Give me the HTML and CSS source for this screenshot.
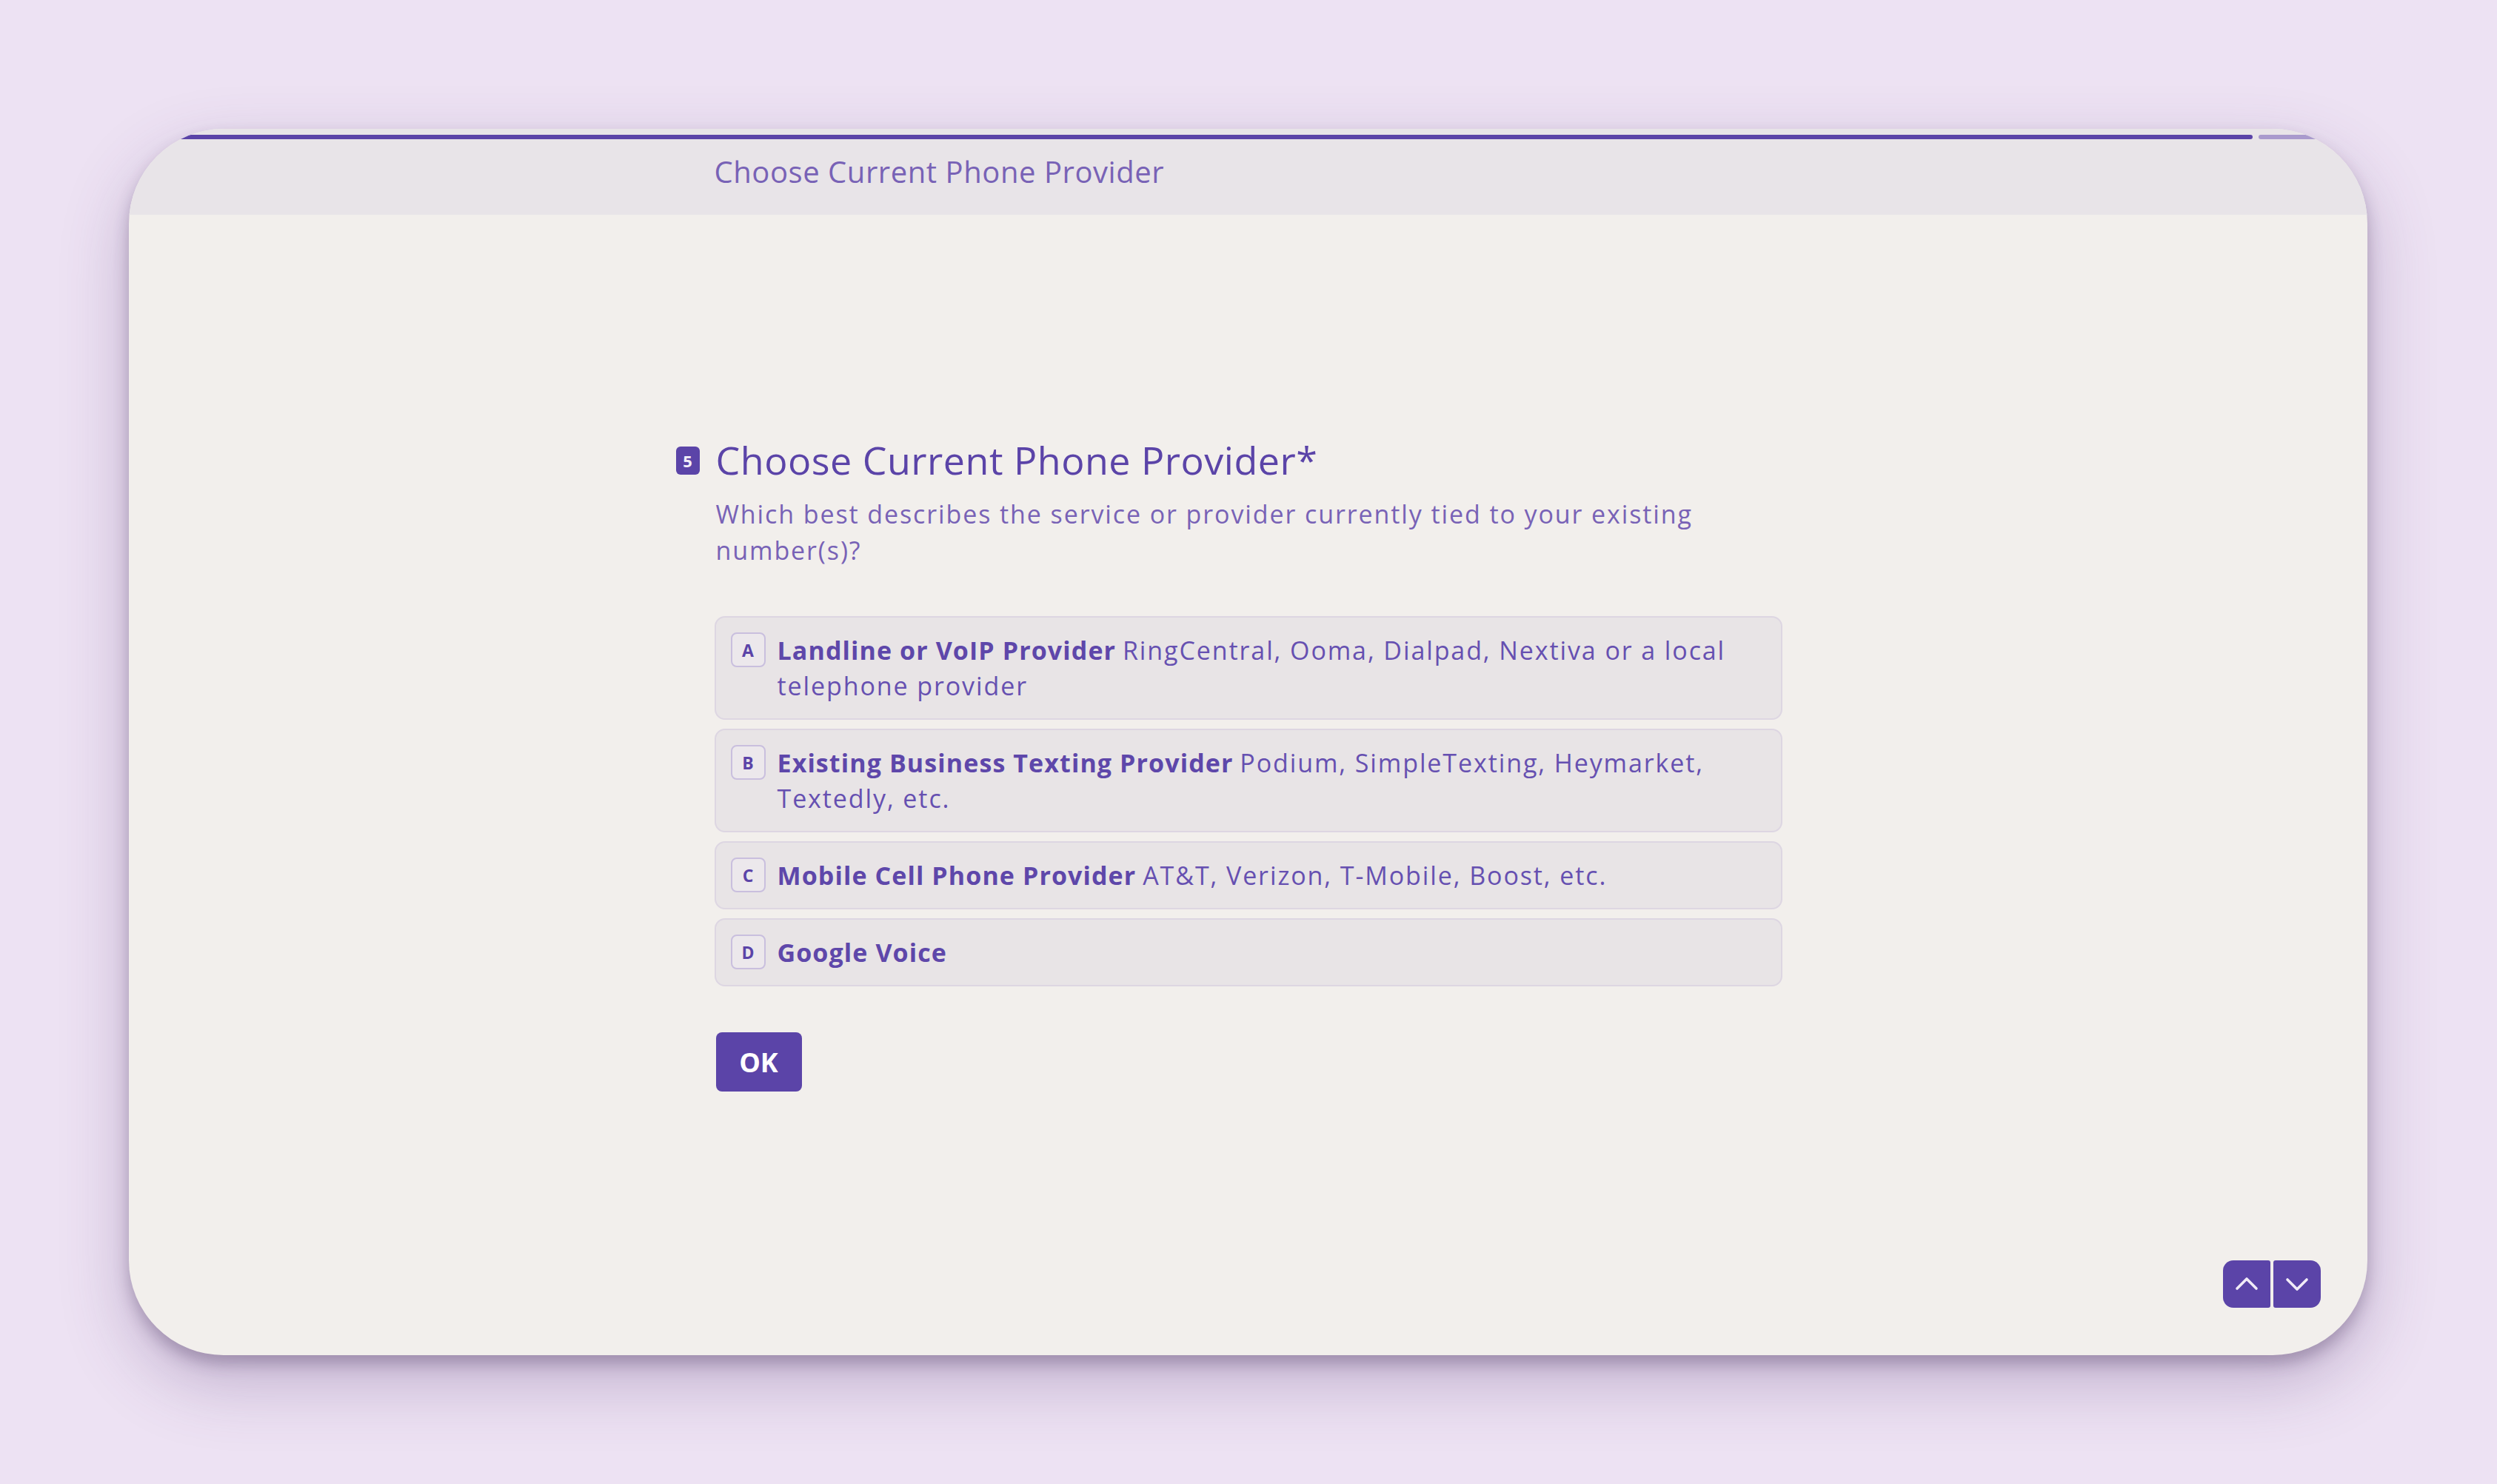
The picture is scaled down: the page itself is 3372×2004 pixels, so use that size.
FILE: index.html
```html
<!DOCTYPE html>
<html lang="en">
<head>
<meta charset="utf-8">
<title>Choose Current Phone Provider</title>
<link rel="stylesheet" href="styles.css">
</head>
<body>
<div class="card">
  <header class="card-header">
    <div class="progress">
      <div class="progress-done"></div>
      <div class="progress-rest"></div>
    </div>
    <div class="header-title">Choose Current Phone Provider</div>
  </header>
  <main class="card-main">
    <section class="question">
      <div class="q-title-row">
        <span class="q-num">5</span>
        <h1 class="q-title">Choose Current Phone Provider*</h1>
      </div>
      <p class="q-desc">Which best describes the service or provider currently tied to your existing number(s)?</p>
      <div class="options">
        <div class="option">
          <span class="key">A</span>
          <span class="label"><b>Landline or VoIP Provider</b> <span class="desc">RingCentral, Ooma, Dialpad, Nextiva or a local telephone provider</span></span>
        </div>
        <div class="option">
          <span class="key">B</span>
          <span class="label"><b>Existing Business Texting Provider</b> <span class="desc">Podium, SimpleTexting, Heymarket, Textedly, etc.</span></span>
        </div>
        <div class="option">
          <span class="key">C</span>
          <span class="label"><b>Mobile Cell Phone Provider</b> <span class="desc">AT&amp;T, Verizon, T-Mobile, Boost, etc.</span></span>
        </div>
        <div class="option">
          <span class="key">D</span>
          <span class="label"><b>Google Voice</b></span>
        </div>
      </div>
      <button class="ok-btn" type="button">OK</button>
    </section>
  </main>
  <nav class="nav-btns">
    <button class="nav-btn nav-up" type="button" aria-label="Previous">
      <svg viewBox="0 0 64 64" width="64" height="64"><path d="M19 38 L32 25 L45 38" fill="none" stroke="#f1ebf7" stroke-width="3.6" stroke-linecap="round" stroke-linejoin="round"/></svg>
    </button>
    <button class="nav-btn nav-down" type="button" aria-label="Next">
      <svg viewBox="0 0 64 64" width="64" height="64"><path d="M19 26 L32 39 L45 26" fill="none" stroke="#f1ebf7" stroke-width="3.6" stroke-linecap="round" stroke-linejoin="round"/></svg>
    </button>
  </nav>
</div>
</body>
</html>
```
FILE: styles.css
```css
* { box-sizing: border-box; }

html, body {
  margin: 0;
  padding: 0;
}

body {
  width: 3372px;
  height: 2004px;
  background: #ede2f3;
  padding: 174px 175px 174px 174px;
  font-family: "Open Sans", "Noto Sans", "Liberation Sans", sans-serif;
  color: #5b44a8;
}

.card {
  position: relative;
  width: 100%;
  height: 100%;
  background: #f2efec;
  border-radius: 128px;
  overflow: hidden;
  display: flex;
  flex-direction: column;
  box-shadow: 0 12px 20px rgba(70, 50, 90, 0.30), 0 36px 90px rgba(90, 60, 120, 0.30);
}

.card-header {
  position: relative;
  height: 116px;
  flex: none;
  background: #e8e4e8;
  padding-top: 30px;
  display: flex;
  justify-content: center;
}

.progress {
  position: absolute;
  left: 0;
  right: 0;
  top: 8px;
  height: 6px;
  display: flex;
  gap: 8px;
}

.progress-done {
  width: 2868px;
  height: 6px;
  background: #5b44a8;
  border-radius: 0 3px 3px 0;
}

.progress-rest {
  flex: 1;
  height: 6px;
  background: #a99acd;
  border-radius: 3px;
}

.header-title {
  width: 1442px;
  font-size: 40px;
  line-height: 56px;
  color: #7862b6;
  letter-spacing: 0.55px;
}

.card-main {
  flex: 1;
  display: flex;
  justify-content: center;
  padding-top: 295px;
}

.question {
  width: 1442px;
  display: flex;
  flex-direction: column;
  align-items: flex-start;
}

.q-title-row {
  position: relative;
  display: flex;
  align-items: center;
}

.q-num {
  position: absolute;
  left: -52px;
  top: 18px;
  width: 32px;
  height: 38px;
  border-radius: 6px;
  background: #5b44a8;
  color: #f3eff8;
  font-size: 22px;
  font-weight: 700;
  display: flex;
  align-items: center;
  justify-content: center;
}

.q-title {
  margin: 0;
  padding-left: 2px;
  font-size: 52px;
  line-height: 72px;
  font-weight: 400;
  color: #5b44a8;
  letter-spacing: 0.5px;
}

.q-desc {
  margin: 13px 0 0 2px;
  font-size: 34px;
  line-height: 49px;
  color: #7862b6;
  letter-spacing: 1.9px;
}

.options {
  align-self: stretch;
  margin-top: 64px;
  display: flex;
  flex-direction: column;
  gap: 12px;
}

.option {
  display: flex;
  align-items: flex-start;
  gap: 16px;
  padding: 20px 22px 20px 20px;
  background: #e8e4e6;
  border: 2px solid #ddd6e2;
  border-radius: 14px;
}

.key {
  flex: none;
  width: 47px;
  height: 47px;
  border: 2px solid #c9bfde;
  border-radius: 8px;
  background: #ece8ec;
  color: #5b44a8;
  font-size: 23px;
  font-weight: 700;
  display: flex;
  align-items: center;
  justify-content: center;
}

.label {
  font-size: 34px;
  line-height: 48px;
  color: #6650b1;
}

.label b {
  font-weight: 700;
  color: #5e47aa;
  letter-spacing: 1.1px;
}

.desc {
  letter-spacing: 1.9px;
}

.ok-btn {
  margin-top: 62px;
  margin-left: 2px;
  width: 116px;
  height: 80px;
  border: none;
  border-radius: 8px;
  background: #5b44a8;
  color: #ffffff;
  font-family: inherit;
  font-size: 36px;
  font-weight: 700;
  padding: 0;
}

.nav-btns {
  position: absolute;
  right: 63px;
  bottom: 64px;
  display: flex;
  gap: 4px;
}

.nav-btn {
  width: 64px;
  height: 64px;
  padding: 0;
  border: none;
  background: #5b44a8;
  display: flex;
  align-items: center;
  justify-content: center;
}

.nav-btn svg { display: block; }

.nav-up { border-radius: 14px 3px 3px 14px; }
.nav-down { border-radius: 3px 14px 14px 3px; }
```
